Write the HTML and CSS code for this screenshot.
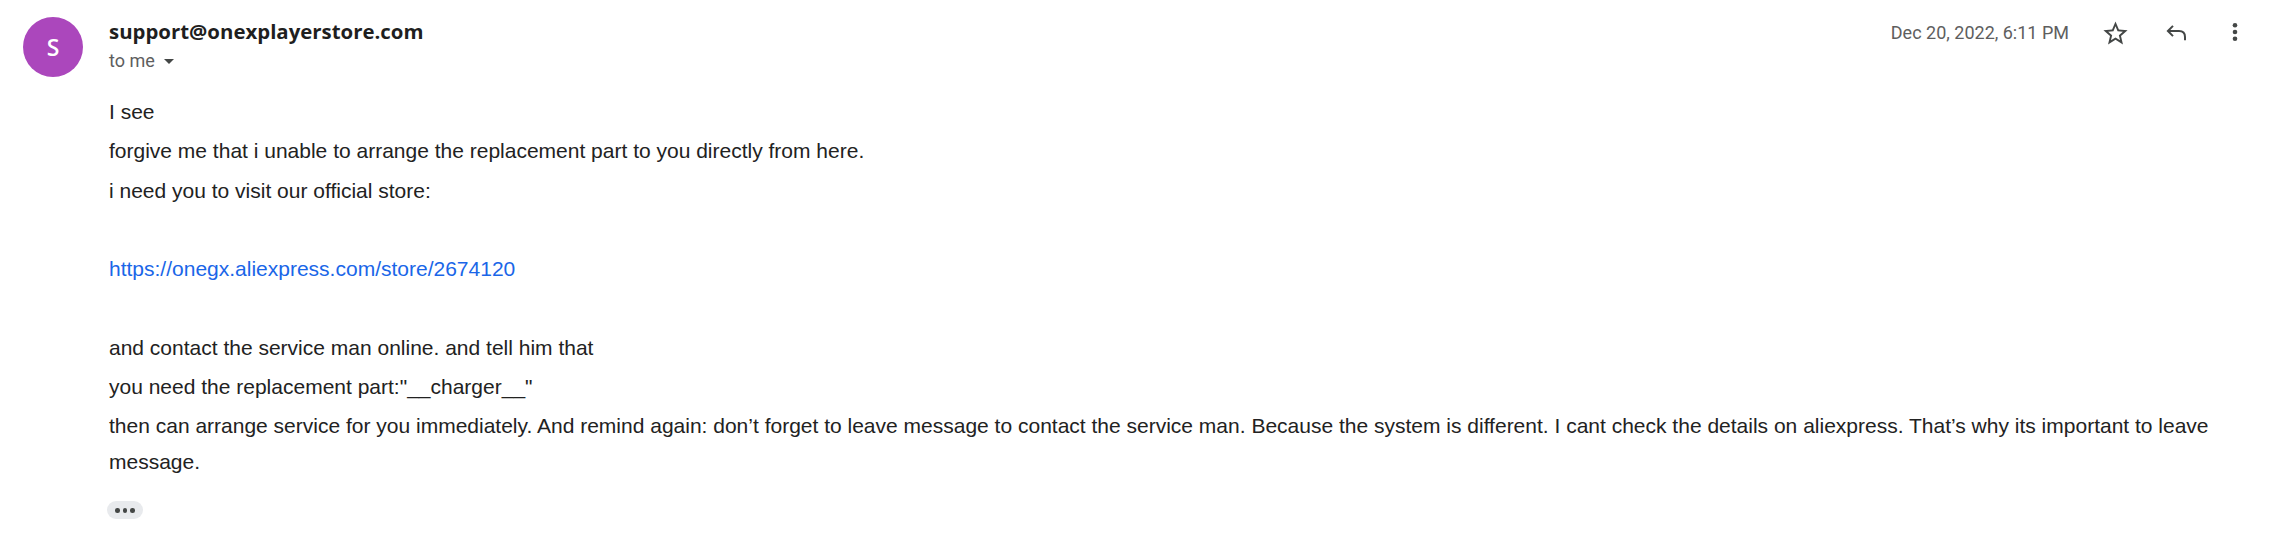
FILE: index.html
```
<!DOCTYPE html>
<html lang="en">
<head>
<meta charset="utf-8">
<title>support@onexplayerstore.com</title>
<link rel="stylesheet" href="styles.css">
</head>
<body>
<div class="msg">
  <div class="avatar">S</div>
  <div class="main">
    <div class="head">
      <div class="sender">
        <div class="name">support@onexplayerstore.com</div>
        <div class="to">to me <span class="caret"></span></div>
      </div>
      <div class="meta">
        <span class="date">Dec 20, 2022, 6:11 PM</span>
        <span class="btn" title="Star">
          <svg class="ico star" viewBox="0 0 24 24"><path d="M22 9.24l-7.19-.62L12 2 9.19 8.63 2 9.24l5.46 4.73L5.82 21 12 17.27 18.18 21l-1.63-7.03L22 9.24zM12 15.4l-3.76 2.27 1-4.28-3.32-2.88 4.38-.38L12 6.1l1.71 4.04 4.38.38-3.32 2.88 1 4.28L12 15.4z"/></svg>
        </span>
        <span class="btn" title="Reply">
          <svg class="ico reply" viewBox="0 0 24 24"><path d="M9 4.9 L3.9 10 L9 15.1 M3.9 10 H15 Q21 10 21 16 V19.2"/></svg>
        </span>
        <span class="btn" title="More">
          <svg class="ico more" viewBox="0 0 24 24"><circle cx="12" cy="5.2" r="2.3"/><circle cx="12" cy="12" r="2.3"/><circle cx="12" cy="18.8" r="2.3"/></svg>
        </span>
      </div>
    </div>
    <div class="body">
      <p>I see</p>
      <p>forgive me that i unable to arrange the replacement part to you directly from here.</p>
      <p>i need you to visit our official store:</p>
      <p><br></p>
      <p><a class="link" href="#">https://onegx.aliexpress.com/store/2674120</a></p>
      <p><br></p>
      <p>and contact the service man online. and tell him that</p>
      <p>you need the replacement part:"__charger__"</p>
      <p>then can arrange service for you immediately. And remind again: don’t forget to leave message to contact the service man. Because the system is different. I cant check the details on aliexpress. That’s why its important to leave message.</p>
      <div class="trim"><span class="dots"><i></i><i></i><i></i></span></div>
    </div>
  </div>
</div>
</body>
</html>
```
FILE: styles.css
```
html, body {
  margin: 0;
  padding: 0;
  background: #ffffff;
}

.msg {
  display: flex;
  gap: 26px;
  padding: 17px 12px 0 23px;
}

.avatar {
  flex: 0 0 60px;
  width: 60px;
  height: 60px;
  border-radius: 50%;
  background: #ab47bc;
  color: #ffffff;
  display: flex;
  align-items: center;
  justify-content: center;
  font: 600 23px/1 "Open Sans", sans-serif;
}

.main {
  flex: 1;
  min-width: 0;
}

.head {
  display: flex;
  justify-content: space-between;
  align-items: flex-start;
}

.sender {
  padding-top: 2px;
}

.name {
  font: 700 20.4px/24px "Open Sans", sans-serif;
  color: #1f1f1f;
}

.to {
  margin-top: 6px;
  display: flex;
  align-items: center;
  font: 400 18px/24px Roboto, sans-serif;
  color: #5e5e5e;
}

.caret {
  width: 0;
  height: 0;
  margin-left: 9px;
  margin-top: 1px;
  border-left: 5.5px solid transparent;
  border-right: 5.5px solid transparent;
  border-top: 5.5px solid #444746;
}

.meta {
  display: flex;
  align-items: center;
  height: 32px;
}

.date {
  font: 400 18px/24px Roboto, sans-serif;
  color: #5e5e5e;
  margin-right: 16px;
}

.btn {
  width: 60px;
  height: 32px;
  display: flex;
  align-items: center;
  justify-content: center;
}

.ico {
  display: block;
}

.star {
  width: 29px;
  height: 29px;
  fill: #444746;
}

.reply {
  width: 24px;
  height: 24px;
  fill: none;
  stroke: #444746;
  stroke-width: 2;
  margin-left: 1px;
}

.more {
  width: 24px;
  height: 24px;
  fill: #444746;
  margin-top: -2px;
}

.body {
  margin-top: 21px;
  font-family: "Liberation Sans", Arial, sans-serif;
  font-size: 21px;
  color: #222222;
}

.body p {
  margin: 0 0 3.3px;
  line-height: 36px;
}

.link {
  color: #1a66e8;
  text-decoration: none;
}

.trim {
  margin-top: 21px;
  margin-left: -2px;
}

.dots {
  width: 36px;
  height: 18px;
  border-radius: 9px;
  background: #e8eaed;
  display: flex;
  align-items: center;
  justify-content: center;
  gap: 3px;
}

.dots i {
  width: 4.5px;
  height: 4.5px;
  border-radius: 50%;
  background: #444746;
}
```
